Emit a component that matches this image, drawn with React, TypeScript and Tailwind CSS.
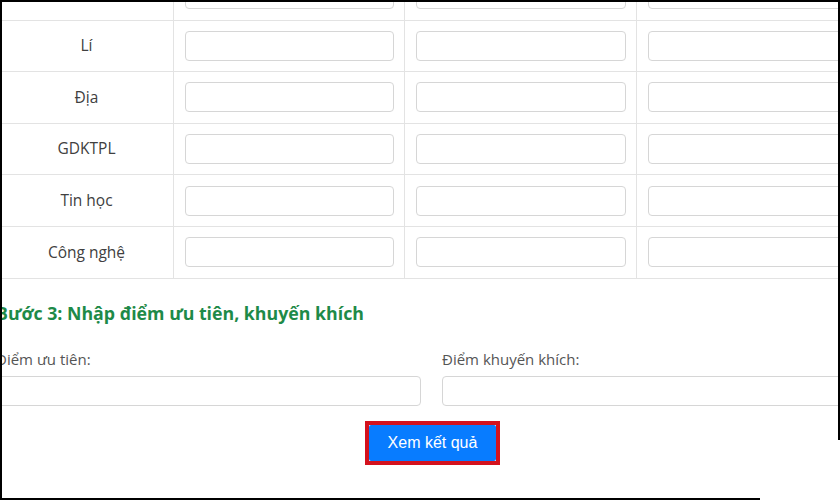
import React from "react";

const subjects = ["", "Lí", "Địa", "GDKTPL", "Tin học", "Công nghệ"];

function Cell({ children, first }: { children?: React.ReactNode; first?: boolean }) {
  return (
    <div
      className={
        "flex items-center border-b border-r border-[#e3e3e3] " +
        (first ? "justify-center" : "pl-[11px] pr-[10px]")
      }
    >
      {children}
    </div>
  );
}

function Box() {
  return <div className="h-[30px] w-full rounded-[4px] border border-[#d6d6d6] bg-white" />;
}

export default function App() {
  return (
    <div
      className="relative h-[500px] w-[840px] overflow-hidden bg-white text-[#444]"
      style={{ fontFamily: '"Open Sans", "Noto Sans", sans-serif' }}
    >
      <div className="mt-[-31px]">
        {subjects.map((s, i) => (
          <div
            key={i}
            className="grid h-[51.6px] grid-cols-[174px_231px_232px_220px]"
          >
            <Cell first>
              <span className="text-[15.5px] text-[#404040]">{s}</span>
            </Cell>
            <Cell>
              <Box />
            </Cell>
            <Cell>
              <Box />
            </Cell>
            <Cell>
              <Box />
            </Cell>
          </div>
        ))}
      </div>

      <div className="ml-[-4px] w-[871px]">
        <h3 className="mt-[21px] text-[17.75px] font-bold leading-[26px] text-[#1e8a48]">
          Bước 3: Nhập điểm ưu tiên, khuyến khích
        </h3>
        <div className="mt-[23px] grid grid-cols-2 gap-x-[21px]">
          <div>
            <div className="text-[15px] leading-[20px] text-[#555]">Điểm ưu tiên:</div>
            <div className="mt-[7px] h-[30px] rounded-[4px] border border-[#d6d6d6]" />
          </div>
          <div>
            <div className="text-[15px] leading-[20px] text-[#555]">Điểm khuyến khích:</div>
            <div className="mt-[7px] h-[30px] rounded-[4px] border border-[#d6d6d6]" />
          </div>
        </div>
        <div className="mt-[15px] flex justify-center pl-[2px]">
          <div className="border-[4px] border-[#d4121e]">
            <button
              className="h-[36px] w-[127px] rounded-[2px] bg-[#087cff] text-[16px] text-white"
              style={{ fontFamily: '"Liberation Sans", Arial, sans-serif' }}
            >
              Xem kết quả
            </button>
          </div>
        </div>
      </div>

      <div className="pointer-events-none absolute inset-x-0 top-0 h-[2px] bg-black" />
      <div className="pointer-events-none absolute bottom-0 left-0 top-0 w-[2px] bg-black" />
      <div className="pointer-events-none absolute right-0 top-0 h-[440px] w-[2px] bg-black" />
      <div className="pointer-events-none absolute bottom-0 left-0 h-[2px] w-[760px] bg-black" />
    </div>
  );
}
